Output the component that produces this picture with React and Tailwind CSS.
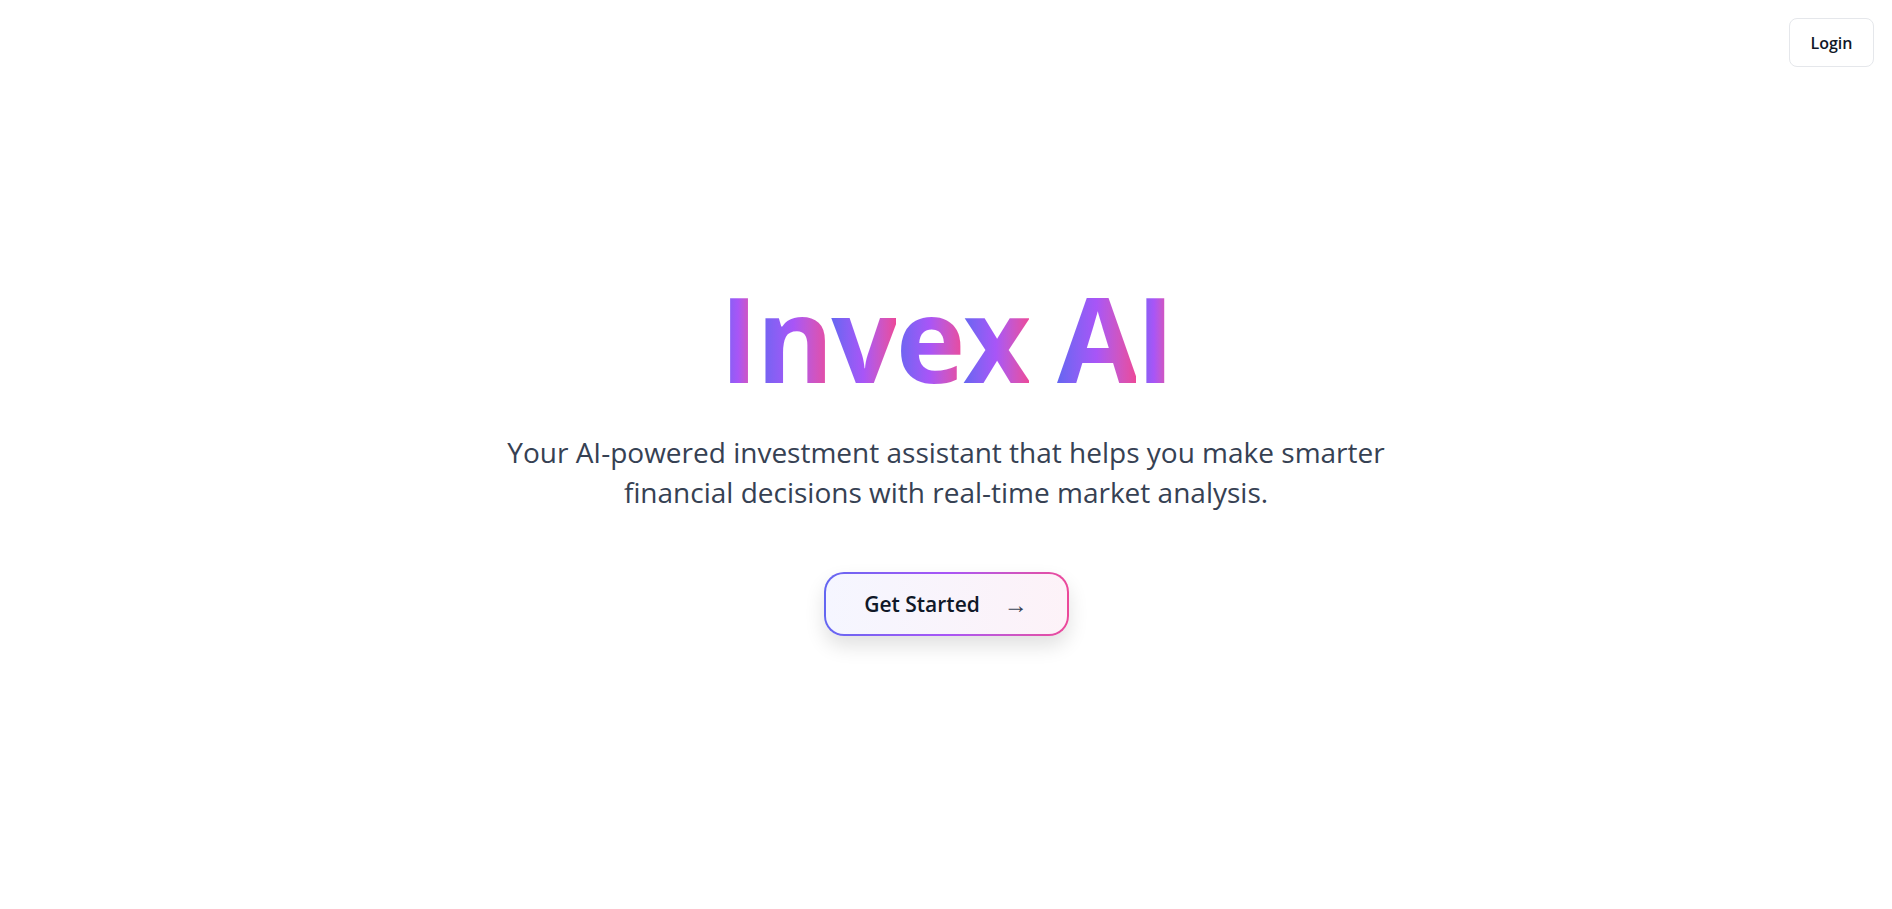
import React from "react";

const letters = ["I", "n", "v", "e", "x", " ", "A", "I"];

export default function App() {
    return (
        <div
            className="relative h-screen w-full bg-white overflow-hidden"
            style={{ fontFamily: '"Open Sans", "Noto Sans", sans-serif' }}
        >
            <header className="absolute top-[18px] right-[18px]">
                <button className="h-[49px] w-[85px] rounded-lg border border-gray-200 bg-white text-[16px] font-semibold text-gray-900">
                    Login
                </button>
            </header>

            <main className="flex h-full flex-col items-center justify-center pb-[6px] text-center">
                <h1 className="text-[118px] font-bold leading-[1.2] tracking-[-2.5px]">
                    {letters.map((ch, i) =>
                        ch === " " ? (
                            <span key={i}> </span>
                        ) : (
                            <span
                                key={i}
                                className="bg-gradient-to-r from-[#6366f1] via-[#a855f7] to-[#ec4899] bg-clip-text text-transparent"
                            >
                                {ch}
                            </span>
                        )
                    )}
                </h1>

                <p className="mt-6 max-w-[1000px] text-[28px] leading-[40px] text-gray-700">
                    Your AI-powered investment assistant that helps you make smarter
                    <br />
                    financial decisions with real-time market analysis.
                </p>

                <div className="mt-[60px] rounded-[20px] bg-gradient-to-r from-[#6366f1] via-[#a855f7] to-[#ec4899] p-[2px] shadow-[0_10px_20px_rgba(0,0,0,0.12)]">
                    <button className="flex h-[60px] w-[241px] items-center justify-center gap-6 rounded-[18px] bg-gradient-to-r from-[#f5f6ff] to-[#fdf2f8] text-[21px] font-semibold text-gray-900">
                        <span>Get Started</span>
                        <span className="text-[24px] font-normal text-gray-700">→</span>
                    </button>
                </div>
            </main>
        </div>
    );
}
